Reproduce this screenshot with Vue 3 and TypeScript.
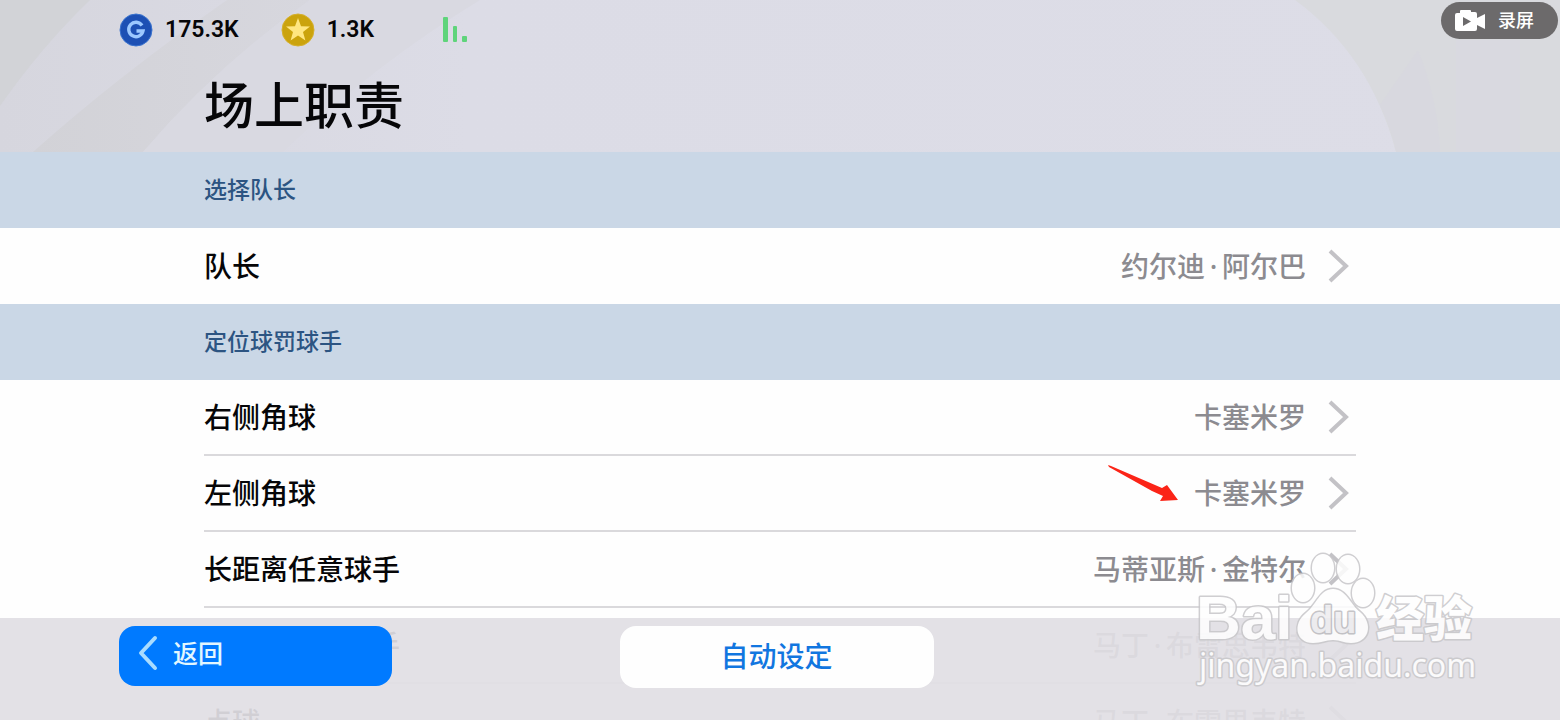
<script setup lang="ts">
interface DutyRow {
  label: string
  player: string[]
  marked?: boolean
}

interface DutyGroup {
  title: string
  rows: DutyRow[]
}

const groups: DutyGroup[] = [
  {
    title: '选择队长',
    rows: [{ label: '队长', player: ['约尔迪', '阿尔巴'] }],
  },
  {
    title: '定位球罚球手',
    rows: [
      { label: '右侧角球', player: ['卡塞米罗'] },
      { label: '左侧角球', player: ['卡塞米罗'], marked: true },
      { label: '长距离任意球手', player: ['马蒂亚斯', '金特尔'] },
      { label: '短距离任意球手', player: ['马丁', '布雷思韦特'] },
      { label: '点球', player: ['马丁', '布雷思韦特'] },
    ],
  },
]
</script>

<template>
  <div class="page">
    <header class="header">
      <svg class="backdrop" viewBox="0 0 1560 152" preserveAspectRatio="none" aria-hidden="true">
        <defs>
          <linearGradient id="baseTone" x1="0" x2="1" y1="0" y2="0">
            <stop offset="0" stop-color="#d6d6de" />
            <stop offset="0.3" stop-color="#dcdce6" />
            <stop offset="1" stop-color="#dddde7" />
          </linearGradient>
          <linearGradient id="bandTone" x1="0" x2="1" y1="0" y2="0">
            <stop offset="0" stop-color="#d2d2d7" />
            <stop offset="1" stop-color="#d7d7de" />
          </linearGradient>
        </defs>
        <rect width="1560" height="152" fill="url(#baseTone)" />
        <path d="M90 0Q42 46 0 106V0Z" fill="#d2d3d7" />
        <path d="M227 0H310Q216 66 143 152H33Q118 76 227 0Z" fill="url(#bandTone)" />
        <path d="M310 0H480Q372 66 283 152H143Q216 66 310 0Z" fill="#d9d9e1" />
        <path d="M1295 0Q1370 55 1396 152H1560V0Z" fill="#d9dade" />
        <path d="M1418 50Q1438 100 1440 152H1396Q1392 130 1380 105Z" fill="#d8d8df" />
        <path d="M1456 40H1520V152H1456Z" fill="#d9d9e0" />
      </svg>

      <div class="status">
        <div class="currency">
          <svg width="34" height="34" viewBox="0 0 34 34" aria-hidden="true">
            <circle cx="17" cy="17" r="16" fill="#1d50b4" stroke="#3b74cf" />
            <path d="M23 12.5A7.2 7.2 0 1 0 24 18H17.5" fill="none" stroke="#9cc8ff" stroke-width="3.4" />
          </svg>
          <span>175.3K</span>
        </div>
        <div class="currency">
          <svg width="34" height="34" viewBox="0 0 34 34" aria-hidden="true">
            <circle cx="17" cy="17" r="16" fill="#cba30c" stroke="#d6b02c" />
            <path d="M17 5L20 13.3L29 13.6L22 19L24.4 27.5L17 22.6L9.6 27.5L12 19L5 13.6L14 13.3Z" fill="#ffe680" />
          </svg>
          <span>1.3K</span>
        </div>
        <svg class="signal" width="26" height="26" viewBox="0 0 26 26" role="img" aria-label="信号">
          <rect x="1" y="0" width="5" height="25" rx="1" fill="#5fd47b" />
          <rect x="11" y="9" width="4" height="16" rx="1" fill="#5fd47b" />
          <rect x="20" y="19" width="5" height="6" rx="1" fill="#5fd47b" />
        </svg>
      </div>
      <h1>场上职责</h1>

      <button class="record" type="button">
        <svg width="32" height="22" viewBox="0 0 32 22" aria-hidden="true">
          <path d="M6 1Q6 0 7 0H16Q17 0 17 1V2H21Q23 2 23 4V8L31 4V19L23 15V19Q23 21 21 21H3Q1 21 1 19V5Q1 3 3 3H6Z" fill="#fff" />
          <path d="M9 7L17 11.500L9 16Z" fill="#6c6a6b" />
        </svg>
        <span>录屏</span>
      </button>
    </header>

    <main class="list">
      <section v-for="group in groups" :key="group.title">
        <h2>{{ group.title }}</h2>
        <ul>
          <li v-for="row in group.rows" :key="row.label">
            <button class="row" type="button">
              <span class="label">{{ row.label }}</span>
              <span class="value">
                <svg v-if="row.marked" class="pointer" width="72" height="40" viewBox="0 0 72 40" aria-hidden="true">
                  <path d="M0 2L1 4L44 28L55 33L52 38L70 37L59 22L54 25L3 3Z" fill="#fb2417" />
                </svg>
                <template v-for="(part, i) in row.player" :key="part"><span v-if="i > 0" class="dot">·</span><span>{{ part }}</span></template>
              </span>
              <svg class="chevron" width="26" height="36" viewBox="0 0 26 36" aria-hidden="true">
                <path d="M4 3L20 18L4 33" fill="none" stroke="#c3c2c6" stroke-width="4" />
              </svg>
            </button>
          </li>
        </ul>
      </section>
    </main>

    <footer class="footer">
      <button class="back" type="button">
        <svg width="22" height="36" viewBox="0 0 22 36" aria-hidden="true">
          <path d="M18 3L4 18L18 33" fill="none" stroke="#a9dcff" stroke-width="4" stroke-linecap="round" stroke-linejoin="round" />
        </svg>
        <span>返回</span>
      </button>
      <button class="auto" type="button">自动设定</button>
    </footer>

    <svg class="watermark" width="290" height="144" viewBox="0 0 290 144" role="img" aria-label="Baidu 经验">
      <g class="mark">
        <text class="latin" x="6" y="91" font-size="62">Bai</text>
        <ellipse cx="133" cy="20" rx="11" ry="14" />
        <ellipse cx="158" cy="21" rx="11" ry="14" />
        <ellipse cx="113" cy="40" rx="11" ry="14" />
        <ellipse cx="173" cy="45" rx="11" ry="14" />
        <path d="M143 41C156 41 160 56 170 64C184 76 179 95 161 95C153 95 151 92 143 92C135 92 132 95 123 95C106 95 102 76 116 65C127 56 130 41 143 41Z" />
        <text class="latin inner" x="120" y="85" font-size="38">du</text>
        <text class="cjk" x="186" y="88" font-size="48">经验</text>
        <text class="url" x="9" y="129" font-size="32">jingyan.baidu.com</text>
      </g>
    </svg>
  </div>
</template>

<style>
body {
  margin: 0;
}
</style>

<style scoped>
.page {
  position: relative;
  display: flex;
  flex-direction: column;
  height: 100vh;
  overflow: hidden;
  background: #fefefe;
  color: #060608;
  font-family: "Noto Sans CJK SC", sans-serif;
}

button {
  border: 0;
  padding: 0;
  color: inherit;
  font: inherit;
  cursor: pointer;
}

.header {
  position: relative;
  flex: none;
  height: 152px;
}

.backdrop {
  position: absolute;
  inset: 0;
  width: 100%;
  height: 100%;
}

.status {
  position: relative;
  display: flex;
  align-items: center;
  height: 60px;
  padding-left: 119px;
}

.currency {
  display: flex;
  align-items: center;
  gap: 12px;
  margin-right: 42px;
  font: 600 23px/32px Roboto, sans-serif;
}

.signal {
  margin-left: 26px;
}

h1 {
  position: relative;
  margin: 6px 204px 0;
  font-size: 50px;
  line-height: 72px;
  font-weight: 500;
}

.record {
  position: absolute;
  top: 2px;
  right: 2px;
  display: flex;
  align-items: center;
  gap: 12px;
  height: 37px;
  padding: 0 24px 0 13px;
  border-radius: 19px;
  background: #6c6a6b;
  color: #fff;
  font-size: 18px;
  line-height: 24px;
  font-weight: 500;
}

.record span {
  padding-bottom: 4px;
}

.list {
  flex: 1;
  min-height: 0;
  overflow: hidden;
}

h2 {
  margin: 0;
  padding: 0 204px 4px;
  background: #cad7e6;
  color: #2c5482;
  font-size: 23px;
  line-height: 72px;
  font-weight: 500;
}

ul {
  margin: 0;
  padding: 0 204px;
  list-style: none;
}

.row {
  display: flex;
  align-items: center;
  box-sizing: border-box;
  width: 100%;
  height: 76px;
  padding-right: 4px;
  background: none;
  font-size: 28px;
  line-height: 40px;
  font-weight: 500;
  text-align: left;
}

li:not(:last-child) .row {
  border-bottom: 2px solid #dad9dc;
}

.label {
  flex: 1;
  padding-bottom: 3px;
}

.value {
  position: relative;
  padding-bottom: 3px;
  color: #8c8b90;
}

.dot {
  display: inline-block;
  width: 17px;
  font-family: "Noto Sans", sans-serif;
  line-height: 1;
  text-align: center;
}

.chevron {
  margin-left: 20px;
}

.pointer {
  position: absolute;
  bottom: 16px;
  right: 100%;
  margin: 0 14px -4px 0;
}

.footer {
  position: absolute;
  inset: auto 0 0;
  display: grid;
  grid-template-columns: 1fr 314px 1fr;
  align-items: start;
  height: 94px;
  padding: 8px 126px 0 119px;
  background: rgba(225, 223, 228, 0.93);
}

.back {
  display: flex;
  align-items: center;
  gap: 14px;
  width: 273px;
  height: 60px;
  padding: 0 18px 6px;
  border-radius: 16px;
  background: #007aff;
  color: #e2f7ff;
  font-size: 25px;
  line-height: 36px;
  font-weight: 500;
}

.back span {
  padding-bottom: 3px;
}

.auto {
  height: 62px;
  padding-bottom: 4px;
  border-radius: 16px;
  background: #fefefe;
  color: #1176e0;
  font-size: 28px;
  font-weight: 500;
}

.watermark {
  position: absolute;
  right: 80px;
  bottom: 28px;
  pointer-events: none;
}

.mark {
  fill: #fff;
  stroke: #c8c7ca;
  stroke-width: 3px;
  stroke-linejoin: round;
  paint-order: stroke;
  opacity: 0.86;
}

.latin {
  font-family: "Liberation Sans", sans-serif;
  font-weight: 700;
}

.inner {
  fill: #eeedf0;
  stroke: #bdbcc0;
}

.cjk {
  font-family: "Noto Sans CJK SC", sans-serif;
  font-weight: 900;
}

.url {
  font-family: "Noto Sans", sans-serif;
}
</style>
